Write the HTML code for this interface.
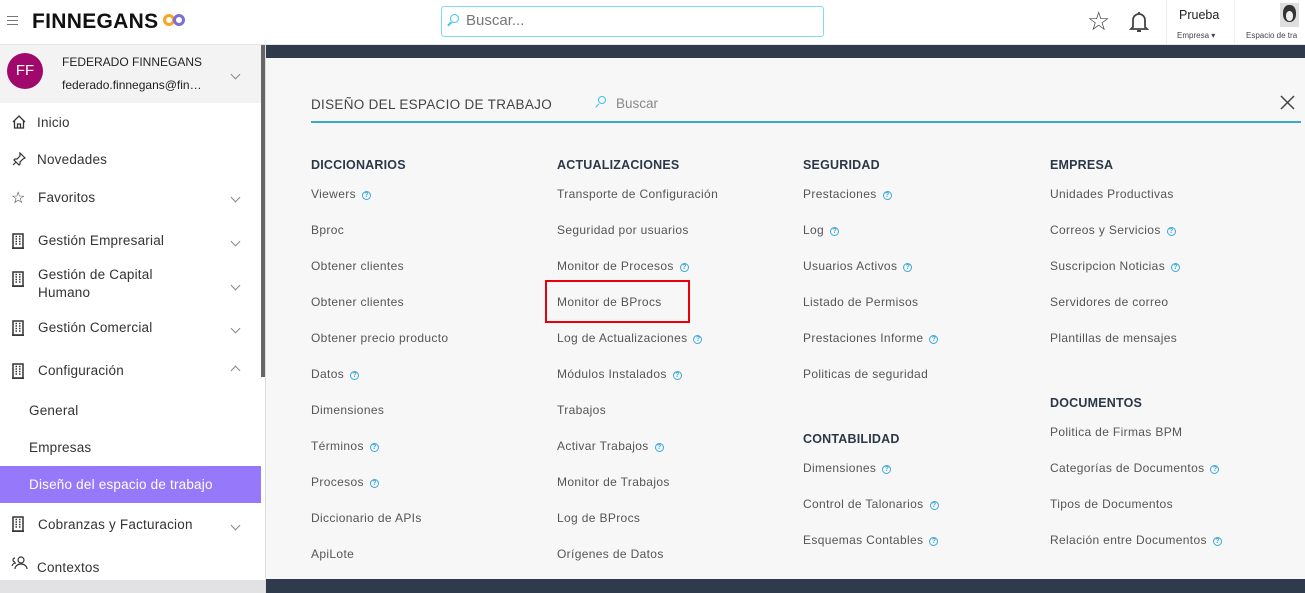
<!DOCTYPE html>
<html><head><meta charset="utf-8"><style>
*{box-sizing:border-box;margin:0;padding:0}
body{width:1305px;height:593px;overflow:hidden;position:relative;background:#fff;font-family:"Liberation Sans",sans-serif;color:#444}
.a{position:absolute;white-space:nowrap}
.top{position:absolute;left:0;top:0;width:1305px;height:45px;background:#fff;border-bottom:1px solid #e6e6e6}
.side{position:absolute;left:0;top:45px;width:261px;height:548px;background:#fff}
.main{position:absolute;left:266px;top:45px;width:1039px;height:548px;background:#f7f7f7}
.si{font-size:13.5px;color:#333;letter-spacing:.2px}
.chev{position:absolute;width:7px;height:7px;border-right:1.2px solid #888;border-bottom:1.2px solid #888;transform:rotate(45deg)}
.chevu{transform:rotate(225deg)}
.h{font-size:12.5px;font-weight:bold;color:#2d3748;letter-spacing:.2px}
.it{font-size:12px;color:#555;letter-spacing:.35px}
.q{display:inline-block;width:9px;height:9px;border:1px solid #3aa8d8;border-radius:50%;font-size:7px;line-height:7px;text-align:center;color:#3aa8d8;margin-left:6px;vertical-align:1px;font-weight:bold;letter-spacing:0}
.bld{position:absolute}
</style></head><body>
<svg width="0" height="0" style="position:absolute"><defs><symbol id="b" viewBox="0 0 12 16"><rect x="1" y="1" width="10" height="14" fill="none" stroke="#333" stroke-width="1.5"/><path d="M3.5 3.5h1.5M7 3.5h1.5M3.5 6h1.5M7 6h1.5M3.5 8.5h1.5M7 8.5h1.5M3.5 11h1.5M7 11h1.5" stroke="#333" stroke-width="1.4"/><path d="M0 15.2h12" stroke="#333" stroke-width="1.5"/></symbol></defs></svg>
<div class="top">
  <div class="a" style="left:7px;top:16px;width:11px;height:1px;background:#777;box-shadow:0 4px 0 #777,0 8px 0 #777"></div>
  <div class="a" style="left:32px;top:10px;font-size:21px;font-weight:bold;color:#111;letter-spacing:0.3px">FINNEGANS</div>
  <div class="a" style="left:163px;top:14px;width:12px;height:12px;border:3px solid #f5a623;border-radius:50%"></div>
  <div class="a" style="left:173px;top:14px;width:12px;height:12px;border:3px solid #7b6fd6;border-radius:50%"></div>
  <div class="a" style="left:441px;top:6px;width:383px;height:31px;border:1px solid #7fdcf5;border-radius:3px;background:#fff"></div>
  <div class="a" style="left:450px;top:14px;width:9px;height:9px;border:1.5px solid #3cc3ee;border-radius:50%"></div>
  <div class="a" style="left:447px;top:23px;width:5px;height:1.5px;background:#3cc3ee;transform:rotate(-45deg)"></div>
  <div class="a" style="left:466px;top:12px;font-size:15px;color:#777">Buscar...</div>
  <div class="a" style="left:1087px;top:7px;font-size:26px;color:#444;line-height:28px">☆</div>
  <svg class="a" style="left:1128px;top:10px" width="22" height="24" viewBox="0 0 22 24"><path d="M5 17V10a6 6 0 0 1 12 0v7l2 2H3z" fill="none" stroke="#444" stroke-width="1.8"/><path d="M9 21h4" stroke="#444" stroke-width="2"/><path d="M11 2v2" stroke="#444" stroke-width="1.8"/></svg>
  <div class="a" style="left:1166px;top:0;width:1px;height:44px;background:#eee"></div>
  <div class="a" style="left:1234px;top:0;width:1px;height:44px;background:#eee"></div>
  <div class="a" style="left:1179px;top:8px;font-size:12.5px;color:#222">Prueba</div>
  <div class="a" style="left:1177px;top:31px;font-size:8px;color:#444">Empresa ▾</div>
  <div class="a" style="left:1280px;top:3px;width:19px;height:24px;background:#dedede"></div>
  <div class="a" style="left:1283px;top:5px;width:13px;height:17px;border-radius:45%;background:#333"></div>
  <div class="a" style="left:1286px;top:11px;width:7px;height:10px;border-radius:45%;background:#eee"></div>
  <div class="a" style="left:1246px;top:31px;font-size:8px;color:#444">Espacio de tra</div>
</div>

<div class="side">
  <div class="a" style="left:0;top:0;width:261px;height:58px;background:#f3f3f3"></div>
  <div class="a" style="left:7px;top:8px;width:36px;height:36px;border-radius:50%;background:#a0086b;color:#fff;font-size:15px;text-align:center;line-height:36px">FF</div>
  <div class="a" style="left:62px;top:10px;font-size:12px;color:#222">FEDERADO FINNEGANS</div>
  <div class="a" style="left:62px;top:33px;font-size:12px;color:#222">federado.finnegans@fin…</div>
  <div class="chev" style="left:232px;top:26px"></div>

  <svg class="a" style="left:12px;top:70px" width="14" height="14" viewBox="0 0 14 14"><path d="M1 7L7 1l6 6M2.5 5.5V13h9V5.5M5.5 13V9h3v4" fill="none" stroke="#333" stroke-width="1.3"/></svg>
  <div class="a si" style="left:37px;top:70px">Inicio</div>
  <svg class="a" style="left:12px;top:107px" width="14" height="14" viewBox="0 0 14 14"><path d="M8 1l5 5-2 1-3 3 0 2-1 1-5-5 1-1 2 0 3-3zM4 10l-3 3" fill="none" stroke="#333" stroke-width="1.2"/></svg>
  <div class="a si" style="left:37px;top:107px">Novedades</div>
  <div class="a" style="left:11px;top:143px;font-size:16px;color:#333">☆</div>
  <div class="a si" style="left:38px;top:145px">Favoritos</div>
  <div class="chev" style="left:232px;top:149px"></div>
  <svg class="bld" style="left:12px;top:188px" width="12" height="16"><use href="#b"/></svg>
  <div class="a si" style="left:38px;top:188px">Gestión Empresarial</div>
  <div class="chev" style="left:232px;top:193px"></div>
  <svg class="bld" style="left:12px;top:226px" width="12" height="16"><use href="#b"/></svg>
  <div class="a si" style="left:38px;top:222px">Gestión de Capital</div>
  <div class="a si" style="left:38px;top:240px">Humano</div>
  <div class="chev" style="left:232px;top:237px"></div>
  <svg class="bld" style="left:12px;top:275px" width="12" height="16"><use href="#b"/></svg>
  <div class="a si" style="left:38px;top:275px">Gestión Comercial</div>
  <div class="chev" style="left:232px;top:280px"></div>
  <svg class="bld" style="left:12px;top:318px" width="12" height="16"><use href="#b"/></svg>
  <div class="a si" style="left:38px;top:318px">Configuración</div>
  <div class="chev chevu" style="left:232px;top:322px"></div>
  <div class="a si" style="left:29px;top:358px">General</div>
  <div class="a si" style="left:29px;top:395px">Empresas</div>
  <div class="a" style="left:0;top:421px;width:261px;height:37px;background:#9679fb"></div>
  <div class="a si" style="left:29px;top:432px;color:#fff">Diseño del espacio de trabajo</div>
  <svg class="bld" style="left:12px;top:471px" width="12" height="16"><use href="#b"/></svg>
  <div class="a si" style="left:38px;top:472px">Cobranzas y Facturacion</div>
  <div class="chev" style="left:232px;top:477px"></div>
  <svg class="a" style="left:11px;top:511px" width="18" height="14" viewBox="0 0 18 14"><circle cx="10" cy="4" r="3" fill="none" stroke="#333" stroke-width="1.2"/><path d="M4 13a6 5 0 0 1 12 0M1 10a4 4 0 0 1 4-3M4 2a2 2 0 0 0 0 4" fill="none" stroke="#333" stroke-width="1.2"/></svg>
  <div class="a si" style="left:37px;top:515px">Contextos</div>
  <div class="a" style="left:0;top:535px;width:266px;height:13px;background:#e2e2e4"></div>
</div>
<div class="a" style="left:261px;top:45px;width:5px;height:332px;background:#666"></div>
<div class="a" style="left:265px;top:45px;width:1px;height:548px;background:#ddd"></div>

<div class="main">
  <div class="a" style="left:0;top:0;width:1039px;height:13px;background:#2f3a4c"></div>
  <div class="a" style="left:0;top:534px;width:1039px;height:14px;background:#2f3a4c"></div>
</div>
<div class="a" style="left:311px;top:97px;font-size:13.5px;color:#444;letter-spacing:.3px">DISEÑO DEL ESPACIO DE TRABAJO</div>
<div class="a" style="left:598px;top:96px;width:8px;height:8px;border:1.4px solid #3cc3ee;border-radius:50%"></div>
<div class="a" style="left:595px;top:105px;width:5px;height:1.4px;background:#3cc3ee;transform:rotate(-45deg)"></div>
<div class="a" style="left:616px;top:96px;font-size:13.5px;color:#888">Buscar</div>
<svg class="a" style="left:1280px;top:95px" width="15" height="15" viewBox="0 0 15 15"><path d="M1 1l13 13M14 1L1 14" stroke="#444" stroke-width="1.5"/></svg>
<div class="a" style="left:311px;top:121px;width:990px;height:1.5px;background:#3aa8c8"></div>

<div class="a h" style="left:311px;top:158px">DICCIONARIOS</div>
<div class="a it" style="left:311px;top:187px">Viewers<span class="q">?</span></div>
<div class="a it" style="left:311px;top:223px">Bproc</div>
<div class="a it" style="left:311px;top:259px">Obtener clientes</div>
<div class="a it" style="left:311px;top:295px">Obtener clientes</div>
<div class="a it" style="left:311px;top:331px">Obtener precio producto</div>
<div class="a it" style="left:311px;top:367px">Datos<span class="q">?</span></div>
<div class="a it" style="left:311px;top:403px">Dimensiones</div>
<div class="a it" style="left:311px;top:439px">Términos<span class="q">?</span></div>
<div class="a it" style="left:311px;top:475px">Procesos<span class="q">?</span></div>
<div class="a it" style="left:311px;top:511px">Diccionario de APIs</div>
<div class="a it" style="left:311px;top:547px">ApiLote</div>

<div class="a h" style="left:557px;top:158px">ACTUALIZACIONES</div>
<div class="a it" style="left:557px;top:187px">Transporte de Configuración</div>
<div class="a it" style="left:557px;top:223px">Seguridad por usuarios</div>
<div class="a it" style="left:557px;top:259px">Monitor de Procesos<span class="q">?</span></div>
<div class="a it" style="left:557px;top:295px">Monitor de BProcs</div>
<div class="a" style="left:545px;top:280px;width:145px;height:43px;border:2.5px solid #e8000b"></div>
<div class="a it" style="left:557px;top:331px">Log de Actualizaciones<span class="q">?</span></div>
<div class="a it" style="left:557px;top:367px">Módulos Instalados<span class="q">?</span></div>
<div class="a it" style="left:557px;top:403px">Trabajos</div>
<div class="a it" style="left:557px;top:439px">Activar Trabajos<span class="q">?</span></div>
<div class="a it" style="left:557px;top:475px">Monitor de Trabajos</div>
<div class="a it" style="left:557px;top:511px">Log de BProcs</div>
<div class="a it" style="left:557px;top:547px">Orígenes de Datos</div>

<div class="a h" style="left:803px;top:158px">SEGURIDAD</div>
<div class="a it" style="left:803px;top:187px">Prestaciones<span class="q">?</span></div>
<div class="a it" style="left:803px;top:223px">Log<span class="q">?</span></div>
<div class="a it" style="left:803px;top:259px">Usuarios Activos<span class="q">?</span></div>
<div class="a it" style="left:803px;top:295px">Listado de Permisos</div>
<div class="a it" style="left:803px;top:331px">Prestaciones Informe<span class="q">?</span></div>
<div class="a it" style="left:803px;top:367px">Politicas de seguridad</div>
<div class="a h" style="left:803px;top:432px">CONTABILIDAD</div>
<div class="a it" style="left:803px;top:461px">Dimensiones<span class="q">?</span></div>
<div class="a it" style="left:803px;top:497px">Control de Talonarios<span class="q">?</span></div>
<div class="a it" style="left:803px;top:533px">Esquemas Contables<span class="q">?</span></div>

<div class="a h" style="left:1050px;top:158px">EMPRESA</div>
<div class="a it" style="left:1050px;top:187px">Unidades Productivas</div>
<div class="a it" style="left:1050px;top:223px">Correos y Servicios<span class="q">?</span></div>
<div class="a it" style="left:1050px;top:259px">Suscripcion Noticias<span class="q">?</span></div>
<div class="a it" style="left:1050px;top:295px">Servidores de correo</div>
<div class="a it" style="left:1050px;top:331px">Plantillas de mensajes</div>
<div class="a h" style="left:1050px;top:396px">DOCUMENTOS</div>
<div class="a it" style="left:1050px;top:425px">Politica de Firmas BPM</div>
<div class="a it" style="left:1050px;top:461px">Categorías de Documentos<span class="q">?</span></div>
<div class="a it" style="left:1050px;top:497px">Tipos de Documentos</div>
<div class="a it" style="left:1050px;top:533px">Relación entre Documentos<span class="q">?</span></div>
</body></html>
